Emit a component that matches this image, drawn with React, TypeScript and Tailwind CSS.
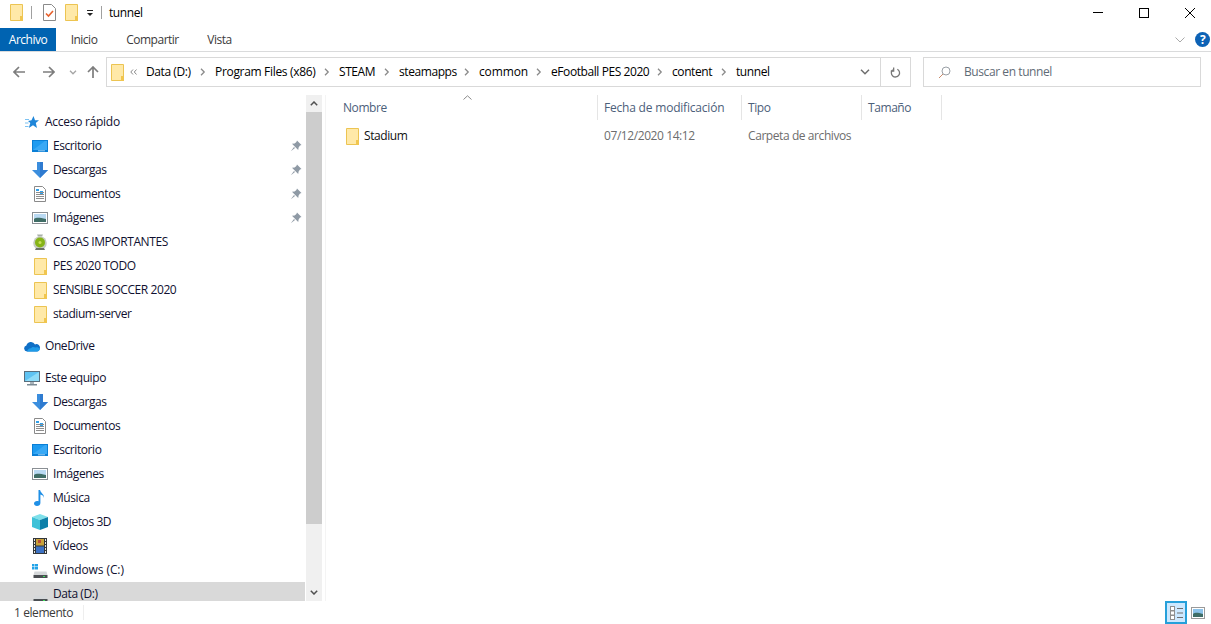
import React from "react";

const Folder = ({ className = "" }: { className?: string }) => (
  <svg viewBox="0 0 13 17" className={`w-[13px] h-[17px] shrink-0 ${className}`}>
    <path d="M.5.5h12v16H.5z" fill="#ffe28f" stroke="#ecc452" />
    <path d="M1 1h11v11h-2v4H1z" fill="#ffe9a8" />
    <path d="M10 12h3v5h-3z" fill="#f1c64f" />
  </svg>
);

const Pin = () => (
  <svg viewBox="0 0 12 12" className="w-3 h-3 shrink-0">
    <path d="M7 0.5 11.500 5 10 5.600 8.600 7.400 8.200 10 2 3.800 4.600 3.400 6.400 2z" fill="#8f9aa5" />
    <path d="M4 7 .8 11.200 5 8z" fill="#8f9aa5" />
  </svg>
);

const Monitor = () => (
  <svg viewBox="0 0 16 12" className="w-4 h-3">
    <rect width="16" height="12" fill="#0a7fd6" />
    <path d="M1 1h14v9H1z" fill="#1e9bf0" />
    <path d="M1 10 13 1h2v9z" fill="#39a9f5" />
    <path d="M6 10.500h7v.7H6z" fill="#d8eefc" />
  </svg>
);

const Download = () => (
  <svg viewBox="0 0 16 16" className="w-4 h-4">
    <path d="M5 0h6v8h5l-8 8-8-8h5z" fill="#3b8ede" />
    <path d="M8 0h3v8h5l-8 8z" fill="#2f7bd0" />
  </svg>
);

const Doc = () => (
  <svg viewBox="0 0 12 16" className="w-3 h-4">
    <path d="M.5.5h8l3 3v12H.5z" fill="#fff" stroke="#8a8a8a" />
    <path d="M2 6h8v1H2zM2 8h8v1H2zM2 10h8v1H2zM2 12h8v1H2z" fill="#8d8d8d" />
    <path d="M2 3h3v2H2zM6 5h3v1H6zM6 7h3v1H6z" fill="#2fa0ea" />
  </svg>
);

const Pics = () => (
  <svg viewBox="0 0 16 12" className="w-4 h-3">
    <rect x=".5" y=".5" width="15" height="11" fill="#fff" stroke="#8a8f94" />
    <rect x="2" y="2" width="12" height="8" fill="#b9d9f2" />
    <path d="M2 7c3-2 6-1 12 0v3H2z" fill="#3f6d66" />
  </svg>
);

const Custom = () => (
  <svg viewBox="0 0 14 16" className="w-[14px] h-4">
    <path d="M4 .5h6l-1 2H5z" fill="#a8b0a8" />
    <circle cx="7" cy="9" r="6.800" fill="#c6cbc2" />
    <circle cx="7" cy="8.500" r="5" fill="#86b416" />
    <circle cx="7" cy="8.500" r="1.500" fill="#c9e05a" />
    <path d="M3 14h8l1 2H2z" fill="#6b7268" />
  </svg>
);

const Cloud = () => (
  <svg viewBox="0 0 16 11" className="w-4 h-[11px]">
    <path d="M3 10.500a3 3 0 0 1-.6-5.900A4.600 4.600 0 0 1 11 3.400a3.600 3.600 0 0 1 4.800 4.400c-.4 1.700-1.500 2.700-2.800 2.700z" fill="#0f6fc6" />
    <path d="M3 10.500h10c1.600 0 2.700-1.200 2.900-2.700-1-1.600-3-2-4.500-1.300C9.500 5.300 7.500 6 7 7.300 5 7 3.500 8.700 3 10.500z" fill="#1f9be8" />
  </svg>
);

const PC = () => (
  <svg viewBox="0 0 16 15" className="w-4 h-[15px]">
    <rect width="16" height="11" fill="#5a6e7c" />
    <rect x="1" y="1" width="14" height="9" fill="#5fc3f2" />
    <path d="M1 10 15 1v9z" fill="#8fdcf8" />
    <path d="M6 11h4v2H6z" fill="#a9b4bb" />
    <path d="M3 13h10v1.500H3z" fill="#7b8a94" />
  </svg>
);

const Music = () => (
  <svg viewBox="0 0 12 16" className="w-3 h-4">
    <path d="M4.500 0h1.600c.4 3 4.400 4 3.900 8-.4-2-2-3-3.600-3.400V13c0 1.800-1.500 3-3.400 3C1.300 16 0 15 0 13.500S1.500 11 3 11c.6 0 1.100.1 1.500.3z" fill="#1f8fe6" />
  </svg>
);

const Cube = () => (
  <svg viewBox="0 0 16 16" className="w-4 h-4">
    <path d="M8 0 16 3 8 6 0 3z" fill="#7fe0ea" />
    <path d="M0 3 8 6v10L0 13z" fill="#3ec2d8" />
    <path d="M16 3 8 6v10l8-3z" fill="#0d7fa8" />
  </svg>
);

const Film = () => (
  <svg viewBox="0 0 14 16" className="w-[14px] h-4">
    <rect width="14" height="16" fill="#33373a" />
    <rect x="3" y="1" width="8" height="6.500" fill="#c9a23a" />
    <rect x="3" y="8.500" width="8" height="6.500" fill="#3d72c4" />
    <path d="M5 2h3v3H5z" fill="#b8503a" />
    <path d="M1 1h1v2H1zM1 4h1v2H1zM1 7h1v2H1zM1 10h1v2H1zM1 13h1v2H1zM12 1h1v2h-1zM12 4h1v2h-1zM12 7h1v2h-1zM12 10h1v2h-1zM12 13h1v2h-1z" fill="#e6e6e6" />
  </svg>
);

const Drive = ({ win = false }: { win?: boolean }) => (
  <svg viewBox="0 0 16 15" className="w-4 h-[15px]">
    {win && <path d="M0 1h2.500v2.500H0zM3 1h3v2.500H3zM0 4h2.500v2.500H0zM3 4h3v2.500H3z" fill="#22a3e8" />}
    <path d="M2.500 8.500h12l1 3.500h-14z" fill="#d5d8da" />
    <rect x="1.500" y="12" width="14" height="3" fill="#4a4e52" />
    <rect x="11" y="13" width="2" height="1" fill="#3de05c" />
  </svg>
);

const Star = () => (
  <svg viewBox="0 0 14 13" className="w-[14px] h-[13px]">
    <path d="M8.500 0 10 4.300h4L10.800 7 12 12 8 9.200 3.800 12 5.300 7 3 5l3.500-.7z" fill="#1f86d9" />
    <path d="M0 3h4v1H0zM0 6.500h3.500v1H0zM0 10h3.500v1H0z" fill="#7cc2f2" />
  </svg>
);

type Item = { label: string; icon: React.ReactNode; pin?: boolean; indent?: boolean; sel?: boolean; wide?: string };

const Row = ({ label, icon, pin, indent = true, sel, wide = "" }: Item) => (
  <div className={`flex items-center h-6 shrink-0 ${sel ? "bg-[#d9d9d9]" : ""}`}>
    <div className={`flex justify-center items-center w-4 ${indent ? "ml-8 mr-[5px]" : "ml-6 mr-[5px]"}`}>{icon}</div>
    <span className={`flex-1 whitespace-nowrap ${wide}`}>{label}</span>
    {pin && <div className="mr-[3px]"><Pin /></div>}
  </div>
);

const Chev = () => (
  <svg viewBox="0 0 6 8" className="w-[6px] h-2 ml-auto mr-[9px] shrink-0">
    <path d="M1 .8 4.200 4 1 7.200" fill="none" stroke="#8a8a8a" strokeWidth="1.300" />
  </svg>
);

const crumbs = [
  { t: "Data (D:)", c: "" },
  { t: "Program Files (x86)", c: "tracking-[-0.32px]" },
  { t: "STEAM", c: "" },
  { t: "steamapps", c: "" },
  { t: "common", c: "tracking-[-0.14px]" },
  { t: "eFootball PES 2020", c: "" },
  { t: "content", c: "" },
  { t: "tunnel", c: "" },
];

const font = "font-['Open_Sans','Noto_Sans',sans-serif]";

export default function App() {
  return (
    <div className={`w-[1211px] h-[624px] overflow-hidden bg-white flex flex-col text-[12px] leading-4 tracking-[-0.42px] text-[#1a1a1a] ${font}`}>
      {/* title bar */}
      <div className="h-7 pb-[3px] flex items-center shrink-0">
        <Folder className="ml-[10px]" />
        <div className="w-px h-[13px] bg-[#a0a0a0] ml-2" />
        <svg viewBox="0 0 13 17" className="w-[13px] h-[17px] ml-[11px]">
          <path d="M.5.5h8l4 4v12H.5z" fill="#fff" stroke="#8a8a8a" />
          <path d="M3 9.500 5.500 12 10 7" fill="none" stroke="#e8602c" strokeWidth="1.600" />
        </svg>
        <Folder className="ml-[9px]" />
        <svg viewBox="0 0 8 8" className="w-2 h-2 ml-[8px]">
          <path d="M1 1h6v1H1z" fill="#222" />
          <path d="M1 4h6L4 7z" fill="#222" />
        </svg>
        <div className="w-px h-[13px] bg-[#a0a0a0] ml-[7px]" />
        <span className="ml-[7px] text-[12px] text-black">tunnel</span>
        <div className="ml-auto flex">
          <div className="w-[46px] h-[25px] flex items-center justify-center">
            <div className="w-[10px] h-px bg-black" />
          </div>
          <div className="w-[46px] h-[25px] flex items-center justify-center">
            <div className="w-[10px] h-[10px] border border-black" />
          </div>
          <div className="w-[46px] h-[25px] flex items-center justify-center -mr-[2px]">
            <svg viewBox="0 0 10 10" className="w-[10px] h-[10px]"><path d="M0 0l10 10M10 0 0 10" stroke="#000" strokeWidth="1" /></svg>
          </div>
        </div>
      </div>
      {/* ribbon tabs */}
      <div className="h-6 flex items-stretch border-b border-[#dadbdc] shrink-0 text-[#3b3b3b] tracking-[-0.5px]">
        <div className="w-14 h-[23px] pt-px bg-[#0063b1] text-white flex items-center justify-center">Archivo</div>
        <div className="w-14 h-[23px] pt-px flex items-center justify-center">Inicio</div>
        <div className="w-[81px] h-[23px] pt-px flex items-center justify-center">Compartir</div>
        <div className="w-[53px] h-[23px] pt-px flex items-center justify-center">Vista</div>
        <div className="ml-auto flex items-center pr-px">
          <svg viewBox="0 0 10 6" className="w-[10px] h-[6px] mr-[10px]"><path d="M.5.500 5 5 9.500.5" fill="none" stroke="#a9a9a9" /></svg>
          <div className="w-[15px] h-[15px] rounded-full bg-[#0d62b5] text-white flex items-center justify-center font-bold text-[12px]">?</div>
        </div>
      </div>
      {/* address row */}
      <div className="h-[43px] flex items-center shrink-0 pb-[3px]">
        <div className="flex items-center w-[106px] shrink-0 pl-[13px]">
          <svg viewBox="0 0 12 12" className="w-3 h-3"><path d="M6 1 1 6l5 5M1 6h11" fill="none" stroke="#7d7d7d" strokeWidth="1.700" /></svg>
          <svg viewBox="0 0 12 12" className="w-3 h-3 ml-[18px]"><path d="M6 1l5 5-5 5M11 6H0" fill="none" stroke="#7d7d7d" strokeWidth="1.700" /></svg>
          <svg viewBox="0 0 8 5" className="w-2 h-[5px] ml-[14px]"><path d="M1 .8 4 3.800 7 .8" fill="none" stroke="#a5a5a5" strokeWidth="1.300" /></svg>
          <svg viewBox="0 0 12 12" className="w-3 h-3 ml-[10px]"><path d="M1 6l5-5 5 5M6 1v11" fill="none" stroke="#7d7d7d" strokeWidth="1.700" /></svg>
        </div>
        <div className="w-[805px] h-[30px] border border-[#d9d9d9] flex items-center shrink-0">
          <Folder className="ml-1" />
          <svg viewBox="0 0 7 6" className="w-[7px] h-[6px] ml-[6px] shrink-0">
            <path d="M3 .5.8 3 3 5.500M6.500.5 4.300 3l2.200 2.500" fill="none" stroke="#8a8a8a" />
          </svg>
          <div className="grid grid-cols-[69px_124px_60px_80px_72px_121px_64px_1fr] items-center ml-[9px] text-black flex-1">
            {crumbs.map((c, i) => (
              <div key={c.t} className="flex items-center">
                <span className={`whitespace-nowrap ${c.c}`}>{c.t}</span>
                {i < crumbs.length - 1 && <Chev />}
              </div>
            ))}
          </div>
          <div className="w-[30px] h-full flex items-center justify-center">
            <svg viewBox="0 0 10 6" className="w-[10px] h-[6px]"><path d="M1 .8 5 4.800 9 .8" fill="none" stroke="#6e6e6e" strokeWidth="1.500" /></svg>
          </div>
          <div className="w-[30px] h-full border-l border-[#d9d9d9] flex items-center justify-center">
            <svg viewBox="0 0 12 12" className="w-[11px] h-[11px]"><path d="M3 3a4.500 4.500 0 1 0 5-.6" fill="none" stroke="#777" strokeWidth="1.400" /><path d="M4 .5v4H.8" fill="none" stroke="#777" strokeWidth="1.400" /></svg>
          </div>
        </div>
        <div className="w-[278px] h-[30px] border border-[#d9d9d9] flex items-center ml-3 shrink-0 text-[#5f6b76]">
          <svg viewBox="0 0 13 13" className="w-[13px] h-[13px] ml-[14px]"><circle cx="8" cy="5" r="4" fill="none" stroke="#9aa0a6" /><path d="M5 8 1 12" stroke="#c98a6a" /></svg>
          <span className="ml-[13px]">Buscar en tunnel</span>
        </div>
      </div>
      {/* body */}
      <div className="flex-1 min-h-0 flex">
        <nav className="w-[305px] shrink-0 pt-[15px] overflow-hidden flex flex-col text-[#101030]">
          <Row label="Acceso rápido" indent={false} wide="tracking-[-0.27px]" icon={<Star />} />
          <Row label="Escritorio" pin icon={<Monitor />} />
          <Row label="Descargas" pin icon={<Download />} />
          <Row label="Documentos" pin icon={<Doc />} />
          <Row label="Imágenes" pin icon={<Pics />} />
          <Row label="COSAS IMPORTANTES" icon={<Custom />} />
          <Row label="PES 2020 TODO" icon={<Folder />} />
          <Row label="SENSIBLE SOCCER 2020" icon={<Folder />} />
          <Row label="stadium-server" icon={<Folder />} />
          <div className="h-2 shrink-0" />
          <Row label="OneDrive" indent={false} icon={<Cloud />} />
          <div className="h-2 shrink-0" />
          <Row label="Este equipo" indent={false} icon={<PC />} />
          <Row label="Descargas" icon={<Download />} />
          <Row label="Documentos" icon={<Doc />} />
          <Row label="Escritorio" icon={<Monitor />} />
          <Row label="Imágenes" icon={<Pics />} />
          <Row label="Música" icon={<Music />} />
          <Row label="Objetos 3D" icon={<Cube />} />
          <Row label="Vídeos" icon={<Film />} />
          <Row label="Windows (C:)" wide="tracking-[-0.09px]" icon={<Drive win />} />
          <Row label="Data (D:)" sel icon={<Drive />} />
        </nav>
        {/* scrollbar */}
        <div className="w-4 ml-px shrink-0 bg-[#f0f0f0] flex flex-col">
          <div className="h-[17px] flex items-center justify-center">
            <svg viewBox="0 0 8 5" className="w-2 h-[5px]"><path d="M.8 4.200 4 1l3.200 3.200" fill="none" stroke="#505050" strokeWidth="1.500" /></svg>
          </div>
          <div className="h-[412px] bg-[#cdcdcd]" />
          <div className="flex-1" />
          <div className="h-[17px] flex items-center justify-center">
            <svg viewBox="0 0 8 5" className="w-2 h-[5px]"><path d="M.8.800 4 4l3.200-3.200" fill="none" stroke="#505050" strokeWidth="1.500" /></svg>
          </div>
        </div>
        {/* list */}
        <main className="flex-1 min-w-0 border-l border-[#f4f4f4] ml-[3px] pl-[10px]">
          <div className="relative flex h-[25px] text-[#4c607a]">
            <div className="w-[262px] pl-[7px] flex items-center border-r border-[#e5e5e5]">Nombre</div>
            <div className="w-[144px] pl-[6px] flex items-center border-r border-[#e5e5e5] tracking-[-0.2px]">Fecha de modificación</div>
            <div className="w-[120px] pl-[6px] flex items-center border-r border-[#e5e5e5]">Tipo</div>
            <div className="w-[80px] pl-[6px] flex items-center border-r border-[#e5e5e5]">Tamaño</div>
            <svg viewBox="0 0 9 5" className="absolute left-[127px] top-0 w-[9px] h-[5px]"><path d="M.5 4.500 4.500.8l4 3.700" fill="none" stroke="#8a8a8a" /></svg>
          </div>
          <div className="flex items-center h-6 mt-1 text-[#6d6d6d]">
            <div className="w-[261px] flex items-center pl-[10px] text-[#111]">
              <Folder />
              <span className="ml-[5px]">Stadium</span>
            </div>
            <div className="w-[144px] pl-[7px]">07/12/2020 14:12</div>
            <div className="w-[120px] pl-[7px]">Carpeta de archivos</div>
          </div>
        </main>
      </div>
      {/* status */}
      <div className="h-[23px] shrink-0 flex items-center text-[#3b3b3b]">
        <span className="ml-[14px] w-[69px]">1 elemento</span>
        <div className="w-px h-[15px] bg-[#eeeeee]" />
        <div className="ml-auto flex items-center mr-[6px]">
          <div className="w-[22px] h-[23px] border-2 border-[#26a0da] bg-[#cce8ff] flex items-center justify-center">
            <svg viewBox="0 0 16 16" className="w-4 h-4">
              <rect x="2" y="1" width="5" height="14" fill="#8f8f8f" />
              <path d="M3 2h3v3H3zM3 6.500h3v3H3zM3 11h3v3H3z" fill="#fff" />
              <path d="M9 3h6v1H9zM9 7.500h6v1H9zM9 12h6v1H9z" fill="#6e6e6e" />
            </svg>
          </div>
          <svg viewBox="0 0 14 12" className="w-[14px] h-3 ml-[4px]">
            <rect x=".5" y=".5" width="13" height="11" fill="#fff" stroke="#9a9a9a" />
            <rect x="2" y="2" width="10" height="8" fill="#8cc3ea" />
            <path d="M2 7c3-2 5-1 10 0v3H2z" fill="#3f6d66" />
          </svg>
        </div>
      </div>
    </div>
  );
}
